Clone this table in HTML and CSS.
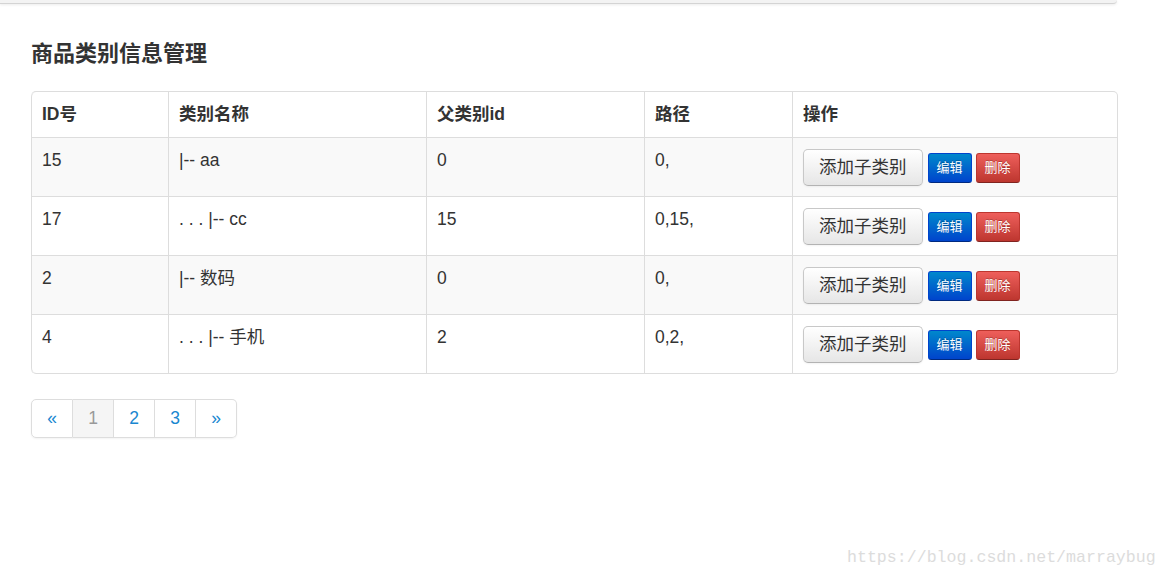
FILE: index.html
```html
<!DOCTYPE html>
<html lang="zh-CN">
<head>
<meta charset="utf-8">
<title>商品类别信息管理</title>
<link rel="stylesheet" href="styles.css">
</head>
<body>
<div class="topbar"></div>
<main class="content">
  <h3 class="title">商品类别信息管理</h3>
  <table class="grid">
    <colgroup>
      <col class="c1"><col class="c2"><col class="c3"><col class="c4"><col class="c5">
    </colgroup>
    <thead>
      <tr><th>ID号</th><th>类别名称</th><th>父类别id</th><th>路径</th><th>操作</th></tr>
    </thead>
    <tbody>
      <tr class="odd">
        <td>15</td><td>|-- aa</td><td>0</td><td>0,</td>
        <td><div class="ops"><button class="btn">添加子类别</button><button class="btn-mini edit">编辑</button><button class="btn-mini del">删除</button></div></td>
      </tr>
      <tr>
        <td>17</td><td>. . . |-- cc</td><td>15</td><td>0,15,</td>
        <td><div class="ops"><button class="btn">添加子类别</button><button class="btn-mini edit">编辑</button><button class="btn-mini del">删除</button></div></td>
      </tr>
      <tr class="odd">
        <td>2</td><td>|-- 数码</td><td>0</td><td>0,</td>
        <td><div class="ops"><button class="btn">添加子类别</button><button class="btn-mini edit">编辑</button><button class="btn-mini del">删除</button></div></td>
      </tr>
      <tr>
        <td>4</td><td>. . . |-- 手机</td><td>2</td><td>0,2,</td>
        <td><div class="ops"><button class="btn">添加子类别</button><button class="btn-mini edit">编辑</button><button class="btn-mini del">删除</button></div></td>
      </tr>
    </tbody>
  </table>
  <nav class="pager">
    <a class="pg">«</a><a class="pg active">1</a><a class="pg">2</a><a class="pg">3</a><a class="pg">»</a>
  </nav>
</main>
<div class="watermark">https://blog.csdn.net/marraybug</div>
</body>
</html>
```

FILE: styles.css
```css
html, body {
  margin: 0;
  padding: 0;
  background: #fff;
}
body {
  font-family: "Liberation Sans", "Noto Sans CJK SC", sans-serif;
  font-size: 17.5px;
  line-height: 25px;
  color: #333;
  width: 1168px;
  height: 578px;
  position: relative;
  overflow: hidden;
}
.topbar {
  width: 1117px;
  height: 3px;
  background: #f3f3f3;
  border-bottom: 1px solid #d4d4d4;
  border-bottom-right-radius: 5px;
  box-shadow: 0 1px 3px rgba(0,0,0,0.08);
}
.content {
  padding: 0 0 0 31px;
  width: 1087px;
}
.title {
  margin: 35px 0 0;
  font-size: 22px;
  line-height: 30px;
  font-weight: bold;
  color: #333;
  height: 30px;
}
.grid {
  margin-top: 22px;
  width: 1087px;
  table-layout: fixed;
  border-collapse: separate;
  border-spacing: 0;
  border: 1px solid #ddd;
  border-left: 0;
  border-radius: 5px;
}
.c1 { width: 137px; }
.c2 { width: 258px; }
.c3 { width: 218px; }
.c4 { width: 148px; }
.c5 { width: 325px; }
.grid th, .grid td {
  border-left: 1px solid #ddd;
  text-align: left;
  vertical-align: top;
  padding: 10px 10px;
  line-height: 25px;
}
.grid th {
  font-weight: bold;
}
.grid td {
  border-top: 1px solid #ddd;
  height: 38px;
}
.grid thead th:first-child { border-top-left-radius: 5px; }
.grid thead th:last-child { border-top-right-radius: 5px; }
.grid tbody tr:last-child td:first-child { border-bottom-left-radius: 5px; }
.grid tbody tr:last-child td:last-child { border-bottom-right-radius: 5px; }
.grid tr.odd td { background: #f9f9f9; }
.ops {
  display: flex;
  align-items: center;
  height: 38px;
  padding-top: 1px;
  box-sizing: border-box;
}
.btn {
  font-family: inherit;
  font-size: 17.5px;
  line-height: 25px;
  height: 37px;
  padding: 5px 15px;
  color: #333;
  border: 1px solid #c8c8c8;
  border-bottom-color: #b3b3b3;
  border-radius: 5px;
  background: linear-gradient(#ffffff, #e6e6e6);
  box-shadow: inset 0 1px 0 rgba(255,255,255,0.2), 0 1px 2px rgba(0,0,0,0.05);
  margin-right: 5px;
}
.btn-mini {
  font-family: inherit;
  font-size: 13px;
  line-height: 18px;
  height: 30px;
  width: 44px;
  padding: 0;
  color: #fff;
  border: 1px solid rgba(0,0,0,0.15);
  border-radius: 3px;
  margin-right: 4px;
  text-shadow: 0 -1px 0 rgba(0,0,0,0.25);
}
.edit {
  background: linear-gradient(#0088cc, #0044cc);
  border-color: #0044cc #0044cc #002a80;
}
.del {
  background: linear-gradient(#ee5f5b, #bd362f);
  border-color: #bd362f #bd362f #802420;
}
.pager {
  display: inline-flex;
  margin-top: 25px;
  border-radius: 5px;
  box-shadow: 0 1px 2px rgba(0,0,0,0.05);
}
.pg {
  display: block;
  width: 41px;
  box-sizing: border-box;
  text-align: center;
  padding: 6px 0;
  line-height: 25px;
  font-size: 17.5px;
  color: #1a87d0;
  border: 1px solid #ddd;
  border-left-width: 0;
  background: #fff;
}
.pg:first-child {
  border-left-width: 1px;
  width: 42px;
  border-radius: 5px 0 0 5px;
}
.pg:last-child {
  border-radius: 0 5px 5px 0;
}
.pg.active {
  background: #f5f5f5;
  color: #999;
}
.watermark {
  position: absolute;
  left: 847px;
  top: 546px;
  font-family: "Liberation Mono", "DejaVu Sans Mono", monospace;
  font-size: 16.6px;
  color: #dcdcdc;
  line-height: 24px;
}
```
